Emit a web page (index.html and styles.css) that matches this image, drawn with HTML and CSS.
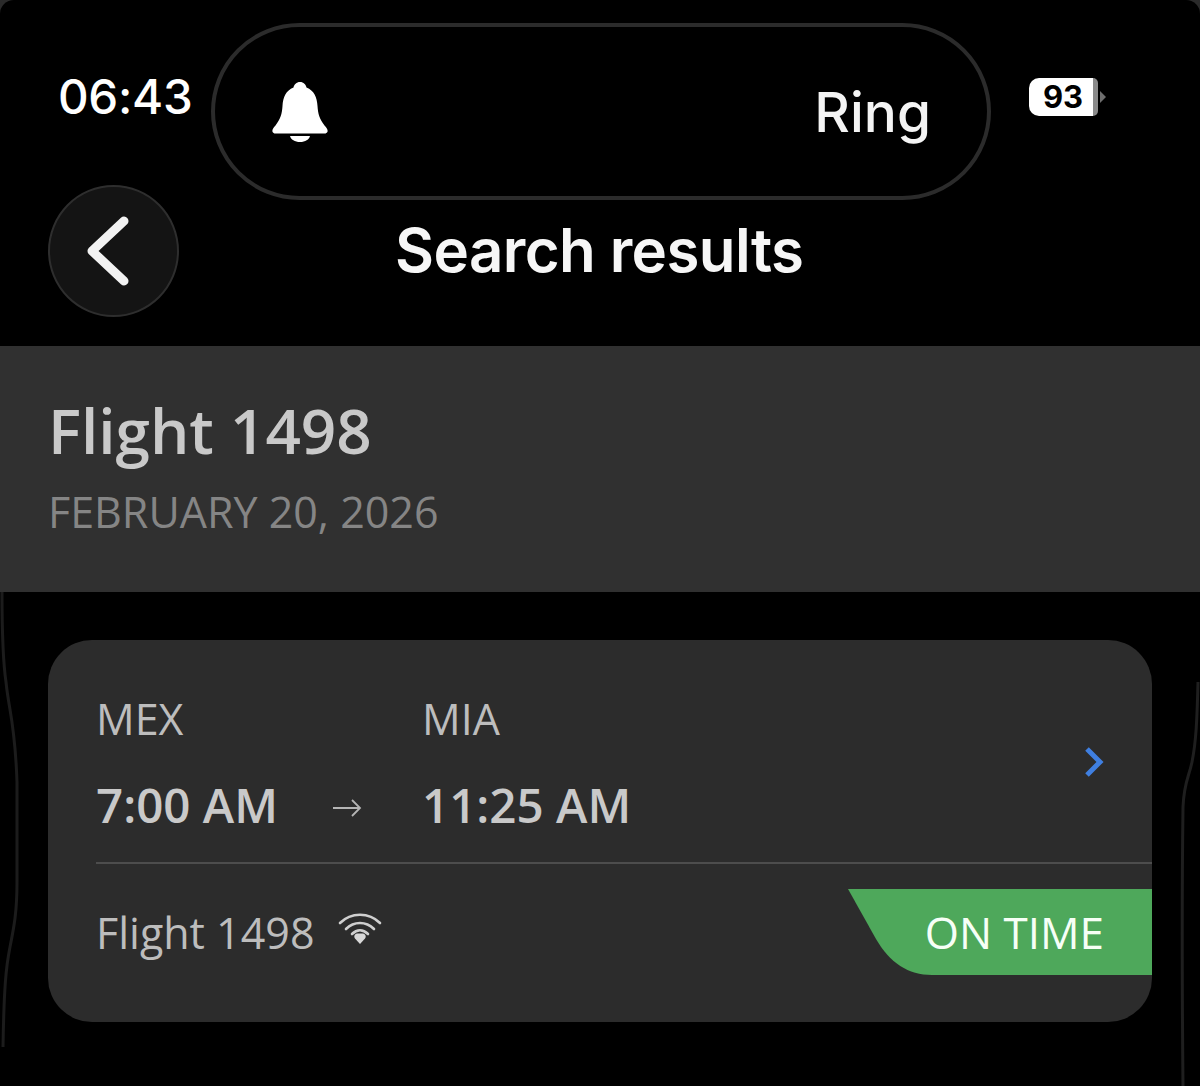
FILE: index.html
```html
<!DOCTYPE html>
<html lang="en">
<head>
    <meta charset="UTF-8">
    <meta name="viewport" content="width=device-width, initial-scale=1.0">
    <title>Search results</title>
    <link rel="stylesheet" href="styles.css">
</head>
<body>
    <div class="screen">
        <!-- Status bar with ringer island -->
        <div class="status-bar">
            <span class="clock">06:43</span>
            <div class="island">
                <svg class="bell" viewBox="0 0 56 60" aria-hidden="true">
                    <path d="M28 0c-3.500 0-6 2.500-6.500 5.500C14 8.500 11 15 10.500 24c-.5 8-2 13-7 19.500C-1 48-.5 51.500 4 51.500h48c4.500 0 5-3.500.5-8-5-6.500-6.500-11.500-7-19.500C45 15 42 8.500 34.500 5.500 34 2.500 31.500 0 28 0z" fill="#fff"/>
                    <path d="M18 54h20c-.8 3.500-4.800 6-10 6s-9.200-2.500-10-6z" fill="#fff"/>
                </svg>
                <span class="ring">Ring</span>
            </div>
            <div class="battery">
                <span class="battery-level">93</span>
                <span class="battery-rest"></span>
                <span class="battery-cap"></span>
            </div>
        </div>

        <!-- Nav -->
        <div class="nav">
            <button class="back" aria-label="Back">
                <svg viewBox="0 0 127 128" aria-hidden="true">
                    <path d="M74 34L42 64 74 94" fill="none" stroke="#f2f2f2" stroke-width="9" stroke-linecap="round" stroke-linejoin="round"/>
                </svg>
            </button>
            <h1 class="title">Search results</h1>
        </div>

        <!-- Flight heading -->
        <section class="band">
            <h2 class="band-title">Flight 1498</h2>
            <p class="band-date">FEBRUARY 20, 2026</p>
        </section>

        <!-- Result -->
        <main class="results">
            <svg class="edge edge-left" viewBox="0 0 24 460" aria-hidden="true">
                <path d="M2 0C2 40 3 70 6 90C9 120 15 130 17 190V290C17 320 14 335 10 355C6 375 4 395 3 455" fill="none" stroke="#1c1c1c" stroke-width="3"/>
            </svg>
            <svg class="edge edge-right" viewBox="0 0 24 404" aria-hidden="true">
                <path d="M22 0C21 40 20 60 16 80C13 95 8 100 7 125C6 200 6 300 7 404" fill="none" stroke="#1f1f1f" stroke-width="3"/>
            </svg>

            <article class="card">
                <div class="card-top">
                    <div class="route">
                        <div class="stop stop-from">
                            <span class="code">MEX</span>
                            <span class="time">7:00 AM</span>
                        </div>
                        <svg class="arrow" viewBox="0 0 30 20" aria-hidden="true">
                            <path d="M1 10H28M20 2l8 8-8 8" fill="none" stroke="#b5b5b5" stroke-width="1.800"/>
                        </svg>
                        <div class="stop">
                            <span class="code">MIA</span>
                            <span class="time">11:25 AM</span>
                        </div>
                    </div>
                    <svg class="chevron" viewBox="0 0 20 30" aria-hidden="true">
                        <path d="M3 2l13 13L3 28" fill="none" stroke="#3f7fe0" stroke-width="5"/>
                    </svg>
                </div>
                <div class="card-bottom">
                    <div class="flight-no">
                        <span>Flight 1498</span>
                        <svg class="wifi" viewBox="0 0 44 32" aria-hidden="true">
                            <path d="M2 11C13 0 31 0 42 11M8 17C16 9 28 9 36 17M14 22C19 17 25 17 30 22" fill="none" stroke="#cfcfcf" stroke-width="2.600" stroke-linecap="round"/>
                            <path d="M22 32l-5-5.500c-1.500-2-.5-4.500 2-5h6c2.500.5 3.500 3 2 5z" fill="#d8d8d8"/>
                        </svg>
                    </div>
                    <div class="badge">ON TIME</div>
                </div>
            </article>
        </main>
    </div>
</body>
</html>
```

FILE: styles.css
```css
* {
    box-sizing: border-box;
}
html, body {
    margin: 0;
    padding: 0;
    background-color: #2a2a2a;
}
body {
    font-family: "Open Sans", "Noto Sans", sans-serif;
    width: 1200px;
    height: 1086px;
    overflow: hidden;
}
.screen {
    height: 1086px;
    background-color: #000;
    border-radius: 14px 14px 0 0;
    overflow: hidden;
}

/* Status bar */
.status-bar {
    display: flex;
    align-items: flex-start;
    height: 200px;
    padding-top: 23px;
    padding-left: 58px;
}
.clock {
    width: 153px;
    margin-top: 44px;
    font-family: Inter, sans-serif;
    font-size: 47.500px;
    font-weight: 500;
    line-height: 60px;
    letter-spacing: -0.3px;
    color: #fff;
}
.island {
    display: flex;
    align-items: center;
    justify-content: space-between;
    width: 780px;
    height: 177px;
    padding: 0 56px 0 57px;
    border: 4px solid #2b2b2b;
    border-radius: 89px;
}
.bell {
    width: 56px;
    height: 60px;
}
.ring {
    font-family: Inter, sans-serif;
    font-size: 55px;
    font-weight: 500;
    color: #f4f4f4;
}
.battery {
    display: flex;
    align-items: center;
    margin-top: 55px;
    margin-left: 38px;
}
.battery-level {
    width: 64px;
    height: 38px;
    background-color: #fff;
    border-radius: 10px 0 0 10px;
    font-family: Inter, sans-serif;
    font-size: 31px;
    font-weight: 700;
    line-height: 38px;
    text-align: center;
    color: #000;
    padding-left: 4px;
}
.battery-rest {
    width: 5px;
    height: 38px;
    background-color: #8a8a8a;
    border-radius: 0 8px 8px 0;
}
.battery-cap {
    width: 0;
    height: 0;
    margin-left: 2px;
    border-top: 6px solid transparent;
    border-bottom: 6px solid transparent;
    border-left: 6px solid #6f6f6f;
}

/* Nav */
.nav {
    display: flex;
    align-items: center;
    height: 132px;
    margin-top: -15px;
    padding-left: 48px;
}
.back {
    flex: none;
    width: 131px;
    height: 132px;
    padding: 0;
    background-color: #141414;
    border: 2px solid #2e2e2e;
    border-radius: 50%;
}
.back svg {
    display: block;
    width: 100%;
    height: 100%;
}
.title {
    margin: -2px 0 0 216px;
    font-family: Inter, sans-serif;
    font-size: 60px;
    font-weight: 600;
    letter-spacing: -0.6px;
    color: #f6f6f6;
    white-space: nowrap;
}

/* Heading band */
.band {
    height: 246px;
    margin-top: 29px;
    padding: 46px 0 0 48px;
    background-color: #303030;
}
.band-title {
    margin: 0;
    font-size: 62px;
    font-weight: 600;
    line-height: 76px;
    color: #c9c9c9;
}
.band-date {
    margin: 17px 0 0;
    font-size: 43px;
    font-weight: 400;
    line-height: 54px;
    color: #858585;
}

/* Result list */
.results {
    position: relative;
    padding: 48px 48px 0;
}
.edge {
    position: absolute;
    width: 24px;
}
.edge-left {
    left: 0;
    top: 0;
    height: 460px;
}
.edge-right {
    right: 0;
    top: 90px;
    height: 404px;
}
.card {
    height: 382px;
    background-color: #2c2c2c;
    border-radius: 44px;
}
.card-top {
    display: flex;
    align-items: center;
    justify-content: space-between;
    height: 224px;
    margin-left: 48px;
    padding: 26px 48px 0 0;
    border-bottom: 2px solid #4d4d4d;
}
.route {
    display: flex;
    align-items: flex-end;
}
.stop {
    display: flex;
    flex-direction: column;
}
.stop-from {
    width: 236px;
}
.code {
    font-size: 43px;
    font-weight: 400;
    line-height: 54px;
    color: #bdbdbd;
}
.time {
    margin-top: 28px;
    font-size: 47.500px;
    font-weight: 600;
    line-height: 62px;
    color: #c9c9c9;
    white-space: nowrap;
}
.arrow {
    width: 30px;
    height: 20px;
    margin: 0 60px 18px 0;
}
.chevron {
    width: 20px;
    height: 30px;
    margin-top: -4px;
}
.card-bottom {
    display: flex;
    align-items: flex-start;
    justify-content: space-between;
    margin-left: 48px;
    padding-top: 25px;
}
.flight-no {
    display: flex;
    align-items: center;
    gap: 24px;
    height: 86px;
    font-size: 43px;
    font-weight: 400;
    color: #bdbdbd;
}
.wifi {
    width: 44px;
    height: 32px;
    margin-top: -8px;
}
.badge {
    width: 304px;
    height: 86px;
    padding-right: 48px;
    background-color: #4ea85b;
    clip-path: path("M0 0H304V86H84C60 86 42 74 28 50Z");
    font-size: 44px;
    font-weight: 500;
    line-height: 86px;
    text-align: right;
    color: #f6fff6;
}
```
